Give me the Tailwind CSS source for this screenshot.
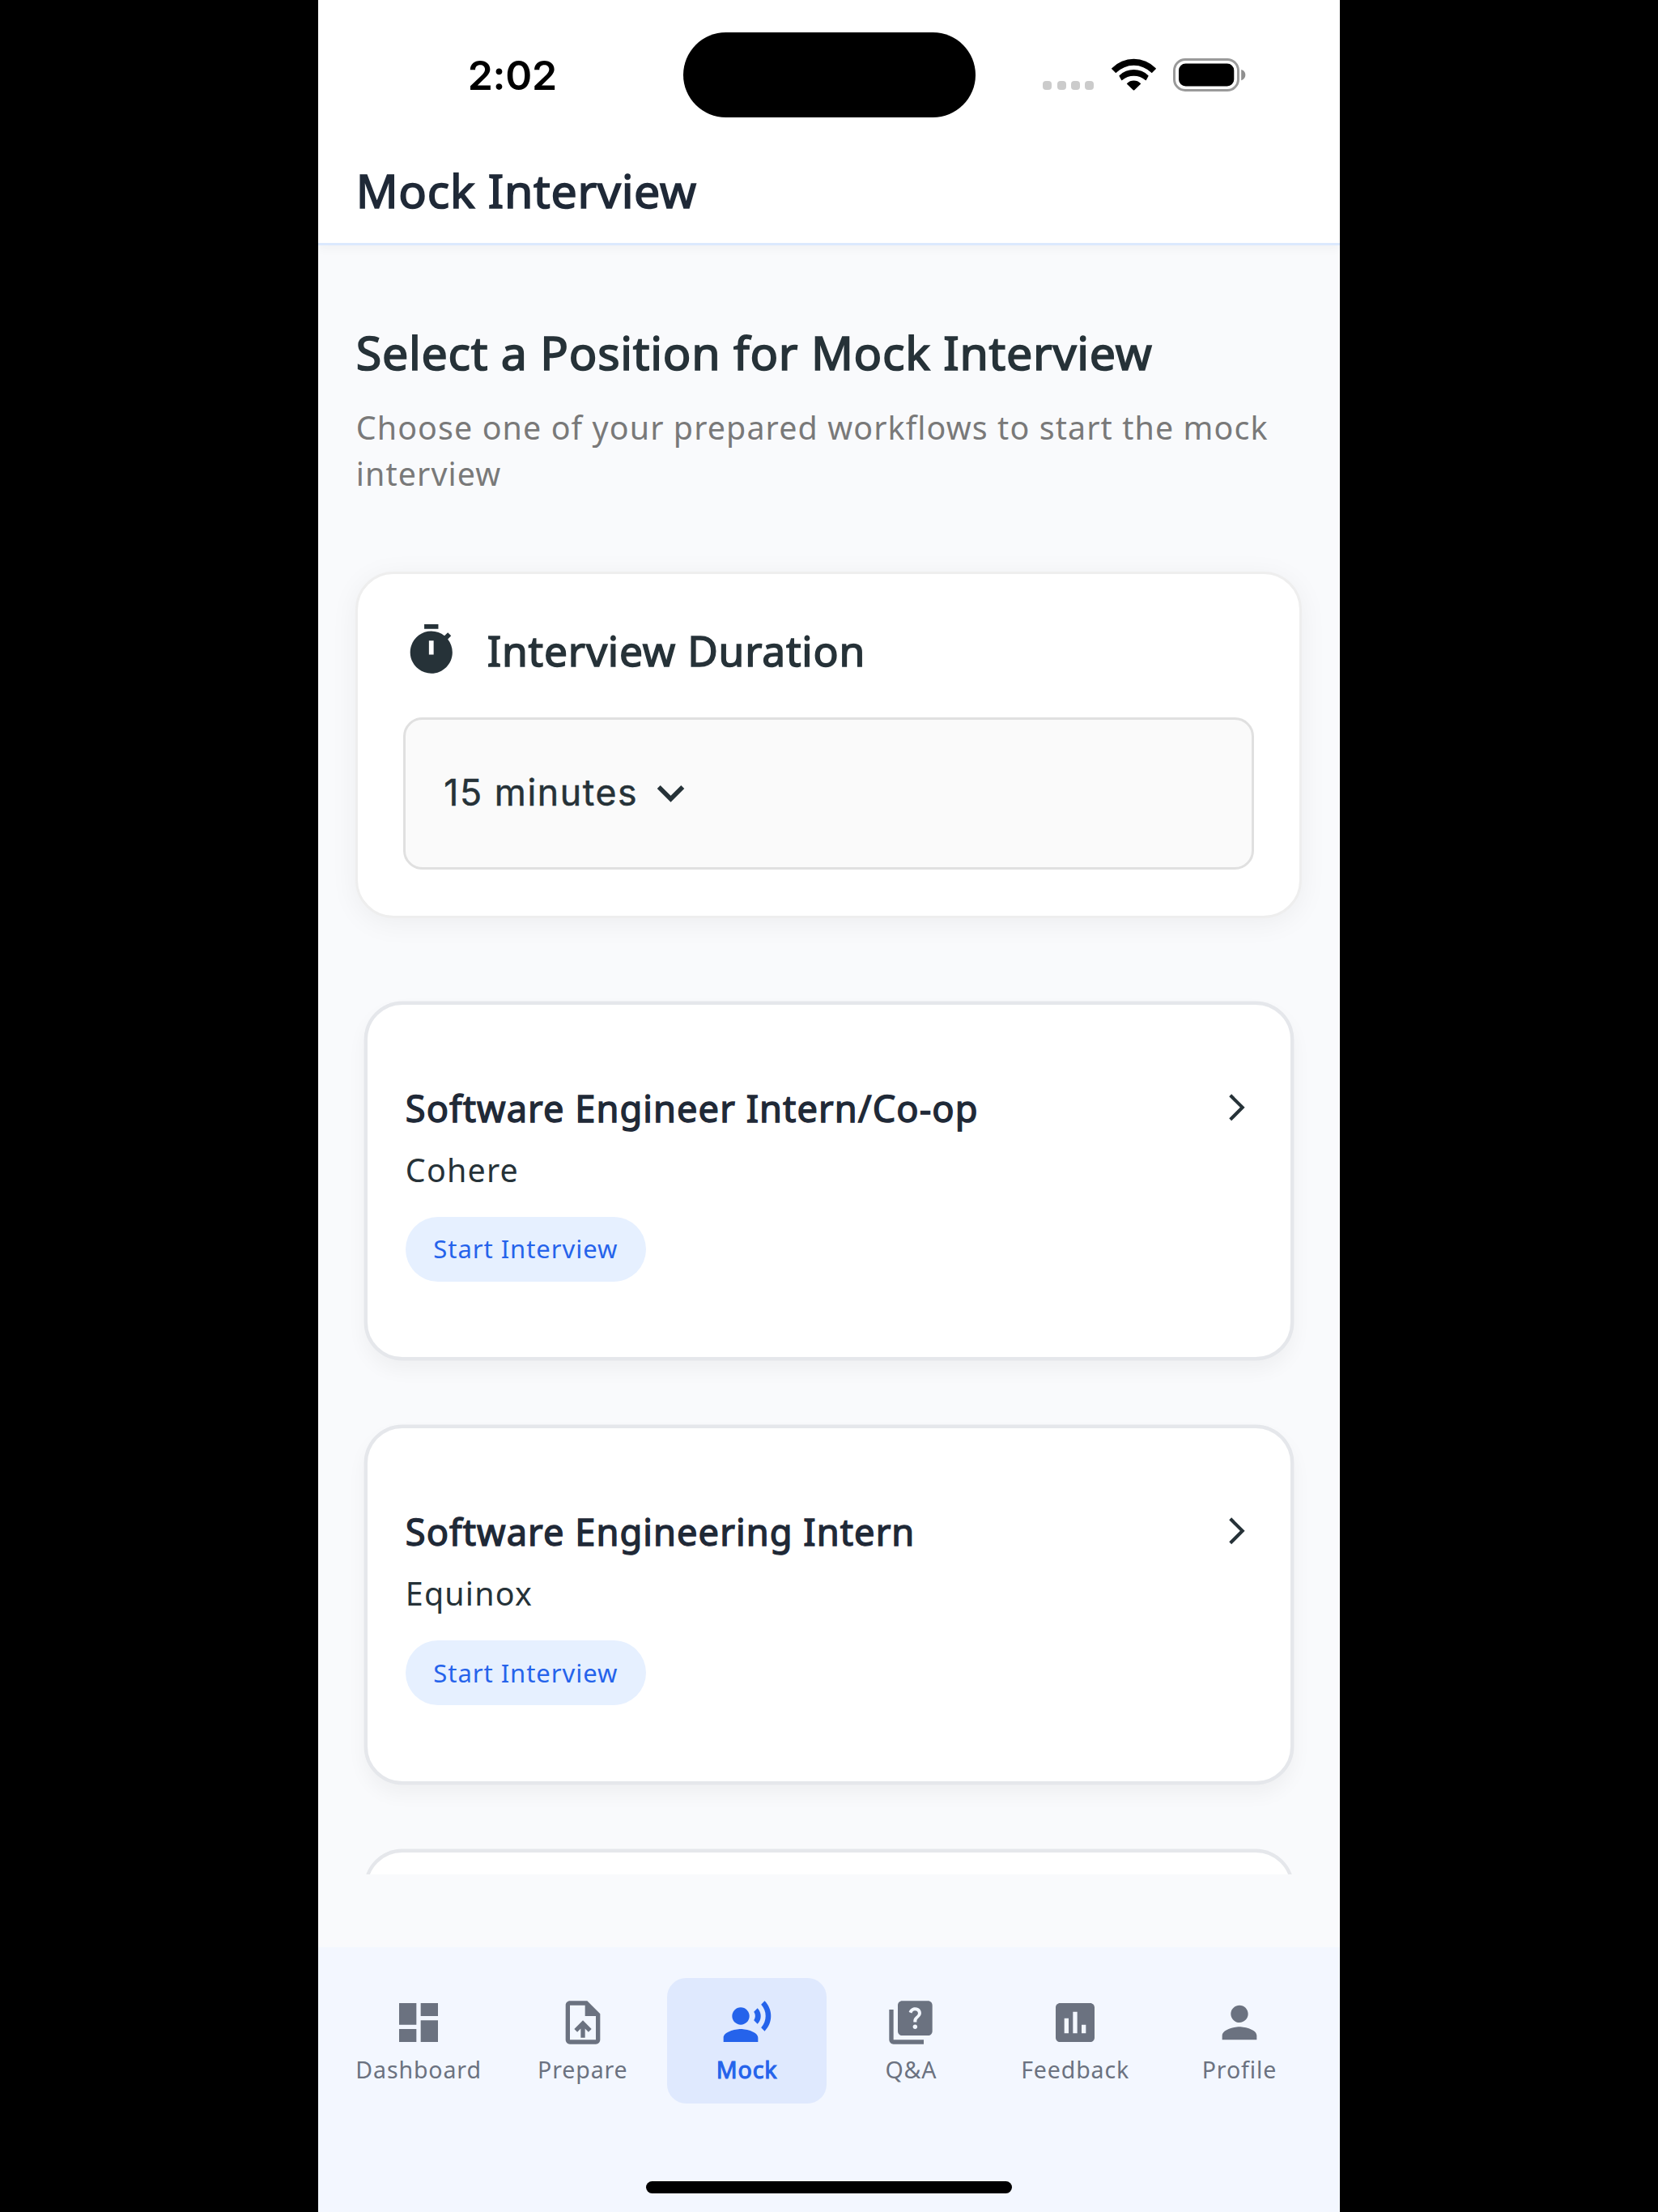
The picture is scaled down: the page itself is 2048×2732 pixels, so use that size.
<!DOCTYPE html>
<html lang="en">
<head>
<meta charset="utf-8">
<title>Mock Interview</title>
<script src="https://cdn.jsdelivr.net/npm/@tailwindcss/browser@4"></script>
</head>
<body class="flex h-[2732px] w-[2048px] justify-center overflow-hidden bg-black">
<div class="flex h-full w-[1262.6px] shrink-0 flex-col bg-[#f9fafc] font-['Noto_Sans',sans-serif] text-[#263238]">

  <header class="relative z-10 h-[303px] shrink-0 border-b-3 border-[#dbe9fe] bg-white shadow-[0_4px_12px_rgba(0,0,0,0.04)]">
    <div class="flex h-[184.5px] items-center pl-[185px] text-black">
      <div class="w-[266px] pt-[2px] font-['Inter',sans-serif] text-[50px] font-semibold leading-none tracking-[-0.3px] whitespace-nowrap">2:02</div>
      <div class="h-[105.5px] w-[361px] rounded-full bg-black"></div>
      <div class="mt-[27px] ml-[83.5px] flex gap-[6.3px]">
        <i class="h-[11px] w-[11px] rounded-[4px] bg-[#cbcbcb]"></i>
        <i class="h-[11px] w-[11px] rounded-[4px] bg-[#cbcbcb]"></i>
        <i class="h-[11px] w-[11px] rounded-[4px] bg-[#cbcbcb]"></i>
        <i class="h-[11px] w-[11px] rounded-[4px] bg-[#cbcbcb]"></i>
      </div>
      <svg class="ml-[22px] h-[40px] w-[55px]" viewBox="0 0 55 40" fill="currentColor">
        <path d="M0.3 13.2Q-.2 12.7 .3 12.2A38 38 0 0 1 54.7 12.2Q55.2 12.7 54.7 13.2L50.2 17.7Q49.7 18.2 49.2 17.7A31 31 0 0 0 5.8 17.7Q5.3 18.2 4.8 17.7Z"/>
        <path d="M9.6 22.3Q9.1 21.7 9.6 21.2A25.8 25.8 0 0 1 45.4 21.2Q45.9 21.7 45.4 22.3L42.8 27Q42.3 27.5 41.8 27A22.5 22.5 0 0 0 13.2 27Q12.7 27.5 12.2 27Z"/>
        <path d="M19 31.8Q18.6 31.3 19.1 30.9A12 12 0 0 1 35.9 30.9Q36.4 31.3 36 31.8L28 39.4Q27.5 39.8 27 39.4Z"/>
      </svg>
      <svg class="ml-[20.8px] h-[41px] w-[90px]" viewBox="0 0 90 41">
        <rect x="1.5" y="1.5" width="79" height="38" rx="13.5" fill="none" stroke="#9a9a9a" stroke-width="3"/>
        <rect x="7" y="6.5" width="68.3" height="28" rx="8.5" fill="#000"/>
        <path d="M84.2 14C88 15 89.3 18 89.3 20.5S88 26 84.2 27.2Z" fill="#8f8f8f"/>
      </svg>
    </div>
    <h1 class="mt-[10.5px] pl-[47px] text-[57.3px] leading-[80px] font-normal tracking-[0.7px] whitespace-nowrap text-[#1f2937] [-webkit-text-stroke:1.7px_#1f2937]">Mock Interview</h1>
  </header>

  <main class="h-[2011.7px] shrink-0 overflow-hidden">
    <div class="px-[47px] pt-[92px]">
      <h2 class="text-[57.3px] leading-[80px] font-normal tracking-[0.74px] whitespace-nowrap [-webkit-text-stroke:1.7px_#263238]">Select a Position for Mock Interview</h2>
      <p class="mt-[24.5px] text-[39.4px] leading-[57px] tracking-[1.1px] whitespace-nowrap text-[#797979]">Choose one of your prepared workflows to start the mock<br>interview</p>

      <section class="-ml-px mt-[92.5px] h-[427.5px] rounded-[47px] border-3 border-[#eeeeee] bg-white px-[56.5px] pt-[57.5px] shadow-[0_6px_35px_rgba(0,0,0,0.055)]">
        <div class="flex h-[72px] items-center">
          <svg class="size-[69.5px]" viewBox="0 0 24 24" fill="currentColor"><path fill-rule="evenodd" d="M15 1H9v2h6V1zM11 14h2V8h-2v6zm8.03-6.61l1.42-1.42c-.43-.51-.9-.99-1.41-1.41l-1.42 1.42C16.07 4.74 14.12 4 12 4c-4.97 0-9 4.03-9 9s4.02 9 9 9 9-4.03 9-9c0-2.12-.74-4.07-1.97-5.61z"/></svg>
          <h3 class="ml-[34px] text-[51.5px] leading-[72px] font-normal tracking-[0.8px] whitespace-nowrap [-webkit-text-stroke:1.5px_#263238]">Interview Duration</h3>
        </div>
        <div class="mt-[47px] flex h-[188.5px] items-center rounded-[23.5px] border-3 border-[#e0e0e0] bg-[#fafafa] pl-[47px] font-['Inter',sans-serif] text-[44.6px] font-normal tracking-[1.6px] whitespace-nowrap [-webkit-text-stroke:0.5px_#263238]">
          <span>15 minutes</span>
          <svg class="ml-[7px] size-[67px]" viewBox="0 0 24 24" fill="currentColor"><path d="M7.41 8.59L12 13.17l4.59-4.58L18 10l-6 6-6-6z"/></svg>
        </div>
      </section>
    </div>

    <div class="mt-[103px] flex flex-col gap-[80.2px] px-[57.6px]">
      <article class="flex h-[443.5px] shrink-0 items-start justify-between rounded-[47px] border-4 border-[#e5e7eb] bg-white pr-[46px] pl-[46.5px] pt-[96px] shadow-[0_0_0_0.4px_#e5e7eb,0_12px_24px_rgba(0,0,0,0.045)]">
        <div>
          <h4 class="text-[45.2px] leading-[64px] font-normal tracking-[1.07px] whitespace-nowrap text-[#1f2937] [-webkit-text-stroke:1.4px_#1f2937]">Software Engineer Intern/Co-op</h4>
          <p class="mt-[16px] text-[39.4px] leading-[56px] tracking-[1.2px]">Cohere</p>
          <div class="mt-[30px] flex h-[80px] w-[297px] items-center justify-center rounded-full bg-[#e6f0ff] text-[31px] tracking-[0.95px] text-[#2563eb]">Start Interview</div>
        </div>
        <svg class="mt-[11px] size-[39.5px]" viewBox="0 0 24 24" fill="currentColor"><path d="M6.23 20.23L8 22l10-10L8 2 6.23 3.77 14.46 12z"/></svg>
      </article>
      <article class="flex h-[443.5px] shrink-0 items-start justify-between rounded-[47px] border-4 border-[#e5e7eb] bg-white pr-[46px] pl-[46.5px] pt-[96px] shadow-[0_0_0_0.4px_#e5e7eb,0_12px_24px_rgba(0,0,0,0.045)]">
        <div>
          <h4 class="text-[45.2px] leading-[64px] font-normal tracking-[1.07px] whitespace-nowrap text-[#1f2937] [-webkit-text-stroke:1.4px_#1f2937]">Software Engineering Intern</h4>
          <p class="mt-[16px] text-[39.4px] leading-[56px] tracking-[1.2px]">Equinox</p>
          <div class="mt-[30px] flex h-[80px] w-[297px] items-center justify-center rounded-full bg-[#e6f0ff] text-[31px] tracking-[0.95px] text-[#2563eb]">Start Interview</div>
        </div>
        <svg class="mt-[10.5px] size-[39.5px]" viewBox="0 0 24 24" fill="currentColor"><path d="M6.23 20.23L8 22l10-10L8 2 6.23 3.77 14.46 12z"/></svg>
      </article>
      <article class="h-[443.5px] shrink-0 rounded-[47px] border-4 border-[#e5e7eb] bg-white shadow-[0_0_0_0.4px_#e5e7eb]"></article>
    </div>
  </main>

  <nav class="mt-auto flex h-[327px] shrink-0 flex-col items-center bg-[#f3f7ff] px-[23px] pt-[38px] text-[28.5px] leading-[40px] tracking-[0.88px] text-[#6b7280]">
    <div class="grid h-[154.7px] w-full grid-cols-6">
      <div class="mx-[2.7px] flex flex-col items-center pt-[22.5px]">
        <svg class="mb-[6px] size-[64px]" viewBox="0 0 24 24" fill="currentColor"><path d="M3 13h8V3H3v10zm0 8h8v-6H3v6zm10 0h8V11h-8v10zm0-18v6h8V3h-8z"/></svg>
        <span>Dashboard</span>
      </div>
      <div class="mx-[2.7px] flex flex-col items-center pt-[22.5px]">
        <svg class="mb-[6px] size-[64px]" viewBox="0 0 24 24" fill="currentColor"><path d="M14 2H6c-1.1 0-1.99.9-1.99 2L4 20c0 1.1.89 2 1.99 2H18c1.1 0 2-.9 2-2V8l-6-6zm4 18H6V4h7v5h5v11zM8 15.01l1.41 1.41L11 14.84V19h2v-4.16l1.59 1.59L16 15.01 12.01 11z"/></svg>
        <span>Prepare</span>
      </div>
      <div class="mx-[2.7px] flex flex-col items-center rounded-[23.5px] bg-[#dfe9fe] pt-[22.5px] text-[#2563eb]">
        <svg class="mb-[6px] size-[64px]" viewBox="0 0 24 24" fill="currentColor"><circle cx="9" cy="9" r="4"/><path d="M9 15c-2.67 0-8 1.34-8 4v2h16v-2c0-2.66-5.33-4-8-4zm7.76-9.64l-1.68 1.69c.84 1.18.84 2.71 0 3.89l1.68 1.69c2.02-2.02 2.02-5.07 0-7.27zM20.07 2l-1.63 1.63c2.77 3.02 2.77 7.56 0 10.74L20.07 16c3.9-3.89 3.91-9.95 0-14z"/></svg>
        <span class="[-webkit-text-stroke:1.1px_#2563eb]">Mock</span>
      </div>
      <div class="mx-[2.7px] flex flex-col items-center pt-[22.5px]">
        <svg class="mb-[6px] size-[64px]" viewBox="0 0 24 24" fill="currentColor"><path d="M4 6H2v14c0 1.1.9 2 2 2h14v-2H4V6z"/><path d="M20 2H8c-1.1 0-2 .9-2 2v12c0 1.1.9 2 2 2h12c1.1 0 2-.9 2-2V4c0-1.1-.9-2-2-2zm-5.99 13c-.59 0-1.05-.47-1.05-1.05 0-.59.47-1.04 1.05-1.04.59 0 1.04.45 1.04 1.04-.01.58-.45 1.05-1.04 1.05zm2.5-6.17c-.63.93-1.23 1.21-1.56 1.81-.13.24-.18.4-.18 1.18h-1.52c0-.41-.06-1.08.26-1.65.41-.73 1.18-1.16 1.63-1.8.48-.68.21-1.94-1.14-1.94-.88 0-1.32.67-1.5 1.23l-1.37-.57C11.51 5.96 12.52 5 13.99 5c1.23 0 2.08.56 2.51 1.26.37.61.58 1.73.01 2.57z"/></svg>
        <span>Q&amp;A</span>
      </div>
      <div class="mx-[2.7px] flex flex-col items-center pt-[22.5px]">
        <svg class="mb-[6px] size-[64px]" viewBox="0 0 24 24" fill="currentColor"><path d="M19 3H5c-1.1 0-2 .9-2 2v14c0 1.1.9 2 2 2h14c1.1 0 2-.9 2-2V5c0-1.1-.9-2-2-2zM9 17H7v-7h2v7zm4 0h-2V7h2v10zm4 0h-2v-4h2v4z"/></svg>
        <span>Feedback</span>
      </div>
      <div class="mx-[2.7px] flex flex-col items-center pt-[22.5px]">
        <svg class="mb-[6px] size-[64px]" viewBox="0 0 24 24" fill="currentColor"><path d="M12 12c2.21 0 4-1.79 4-4s-1.79-4-4-4-4 1.79-4 4 1.79 4 4 4zm0 2c-2.67 0-8 1.34-8 4v2h16v-2c0-2.66-5.33-4-8-4z"/></svg>
        <span>Profile</span>
      </div>
    </div>
    <div class="mt-[96.5px] h-[15px] w-[451.5px] rounded-full bg-black"></div>
  </nav>
</div>
</body>
</html>
